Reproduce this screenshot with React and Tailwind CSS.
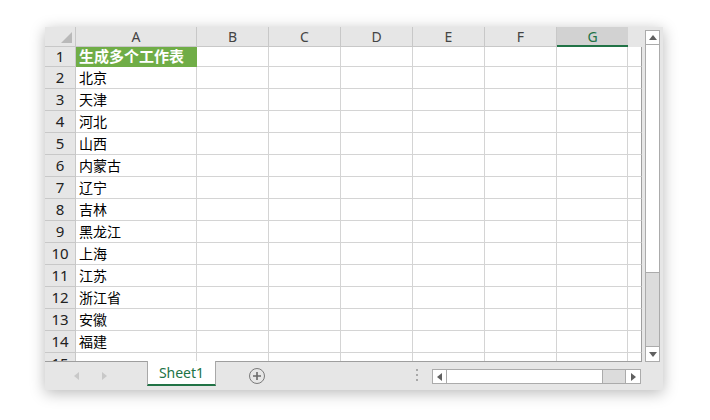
import React from "react";

const cols = [
  { k: "A", w: "w-[121px]" },
  { k: "B", w: "w-[72px]" },
  { k: "C", w: "w-[72px]" },
  { k: "D", w: "w-[72px]" },
  { k: "E", w: "w-[72px]" },
  { k: "F", w: "w-[72px]" },
  { k: "G", w: "w-[71px]" },
];

const places = ["北京", "天津", "河北", "山西", "内蒙古", "辽宁", "吉林", "黑龙江", "上海", "江苏", "浙江省", "安徽", "福建"];

const cjk = { fontFamily: '"Noto Sans CJK SC", "Noto Sans", sans-serif' };

function HeaderRow() {
  return (
    <div className="flex h-[20px] shrink-0 text-[14px] text-[#444]">
      <div className="relative w-[31px] h-full border-r border-b border-[#c8c8c8] bg-[#e6e6e6]">
        <div className="absolute right-[3px] bottom-[3px] w-0 h-0 border-l-[11px] border-l-transparent border-b-[11px] border-b-[#b9b9b9]" />
      </div>
      {cols.map((c) =>
        c.k === "G" ? (
          <div key={c.k} className={`${c.w} h-full flex items-center justify-center bg-[#d2d2d2] border-b-2 border-[#217346] text-[#217346]`}>
            {c.k}
          </div>
        ) : (
          <div key={c.k} className={`${c.w} h-full flex items-center justify-center bg-[#e6e6e6] border-r border-b border-[#c8c8c8]`}>
            {c.k}
          </div>
        )
      )}
      <div className="flex-1 bg-[#e6e6e6]" />
    </div>
  );
}

function Row({ n, text, first }) {
  return (
    <div className={`flex shrink-0 ${first ? "h-[20px]" : "h-[22px]"}`}>
      <div className="w-[31px] h-full flex items-center justify-center bg-[#e6e6e6] border-r border-b border-[#c8c8c8] text-[15px] text-[#222]">
        {n}
      </div>
      {cols.map((c, i) =>
        i === 0 ? (
          first ? (
            <div key={c.k} className={`${c.w} h-full flex items-center pl-[3px] bg-[#70ad47] border-r border-b border-[#70ad47] text-white font-bold text-[15px] whitespace-nowrap`} style={cjk}>
              {text}
            </div>
          ) : (
            <div key={c.k} className={`${c.w} h-full flex items-center pl-[3px] bg-white border-r border-b border-[#d4d4d4] text-[14px] text-black whitespace-nowrap`} style={cjk}>
              {text}
            </div>
          )
        ) : (
          <div key={c.k} className={`${c.w} h-full bg-white border-r border-b border-[#d4d4d4]`} />
        )
      )}
      <div className="flex-1 h-full bg-white border-r border-b border-[#d4d4d4] border-r-[#9e9e9e]" />
    </div>
  );
}

function Tri({ dir, color }) {
  const pts = {
    up: "0,5 4,0 8,5",
    down: "0,0 8,0 4,5",
    left: "5,0 5,8 0,4",
    right: "0,0 0,8 5,4",
  }[dir];
  const vb = dir === "up" || dir === "down" ? "0 0 8 5" : "0 0 5 8";
  const size = dir === "up" || dir === "down" ? { w: 8, h: 5 } : { w: 5, h: 8 };
  return (
    <svg width={size.w} height={size.h} viewBox={vb}>
      <polygon points={pts} fill={color} />
    </svg>
  );
}

export default function App() {
  return (
    <div className="w-[710px] h-[420px] bg-white pt-[27px] pl-[45px]" style={{ fontFamily: '"Noto Sans", "Liberation Sans", sans-serif' }}>
      <div className="flex w-[618px] h-[363px] bg-[#e6e6e6] shadow-[0_3px_14px_rgba(0,0,0,0.28)]">
        {/* sheet area */}
        <div className="flex flex-col w-[597px] h-full">
          <div className="flex flex-col h-[335px] overflow-hidden border-b border-[#9e9e9e]">
            <HeaderRow />
            <Row n={1} text="生成多个工作表" first />
            {places.map((p, i) => (
              <Row key={i} n={i + 2} text={p} />
            ))}
            <Row n={15} text="" />
          </div>

          {/* tab bar */}
          <div className="flex items-start h-[28px] bg-[#e6e6e6]">
            <div className="flex items-center gap-[23px] pl-[29px] pt-[10px] w-[102px]">
              <Tri dir="left" color="#c8c8c8" />
              <Tri dir="right" color="#c8c8c8" />
            </div>
            <div className="w-[69px] h-[25px] -mt-px bg-white border-x border-[#a8a8a8] border-b-2 border-b-[#217346] flex items-center justify-center text-[14px] text-[#217346]">
              Sheet1
            </div>
            <div className="ml-[33px] mt-[6px] w-[16px] h-[16px] rounded-full border border-[#7a7a7a] flex items-center justify-center">
              <svg width="10" height="10" viewBox="0 0 10 10">
                <path d="M5 1v8M1 5h8" stroke="#6a6a6a" strokeWidth="1.6" />
              </svg>
            </div>
            <div className="ml-[151px] mt-[7px] flex flex-col gap-[3px]">
              <div className="w-[2px] h-[2px] bg-[#a8a8a8]" />
              <div className="w-[2px] h-[2px] bg-[#a8a8a8]" />
              <div className="w-[2px] h-[2px] bg-[#a8a8a8]" />
            </div>
            <div className="ml-[14px] mt-[7px] flex h-[15px] w-[209px] border border-[#ababab] bg-[#dcdcdc]">
              <div className="w-[14px] h-full bg-white border-r border-[#ababab] flex items-center justify-center">
                <Tri dir="left" color="#606060" />
              </div>
              <div className="w-[156px] h-full bg-white border-r border-[#ababab]" />
              <div className="flex-1" />
              <div className="w-[15px] h-full bg-white border-l border-[#ababab] flex items-center justify-center">
                <Tri dir="right" color="#606060" />
              </div>
            </div>
          </div>
        </div>

        {/* vertical scrollbar */}
        <div className="pl-[3px] pt-[3px]">
          <div className="flex flex-col w-[15px] h-[332px] border border-[#ababab] bg-[#dcdcdc]">
            <div className="h-[14px] bg-white border-b border-[#ababab] flex items-center justify-center">
              <Tri dir="up" color="#606060" />
            </div>
            <div className="h-[228px] bg-white border-b border-[#ababab]" />
            <div className="flex-1" />
            <div className="h-[15px] bg-white border-t border-[#ababab] flex items-center justify-center">
              <Tri dir="down" color="#606060" />
            </div>
          </div>
        </div>
      </div>
    </div>
  );
}
